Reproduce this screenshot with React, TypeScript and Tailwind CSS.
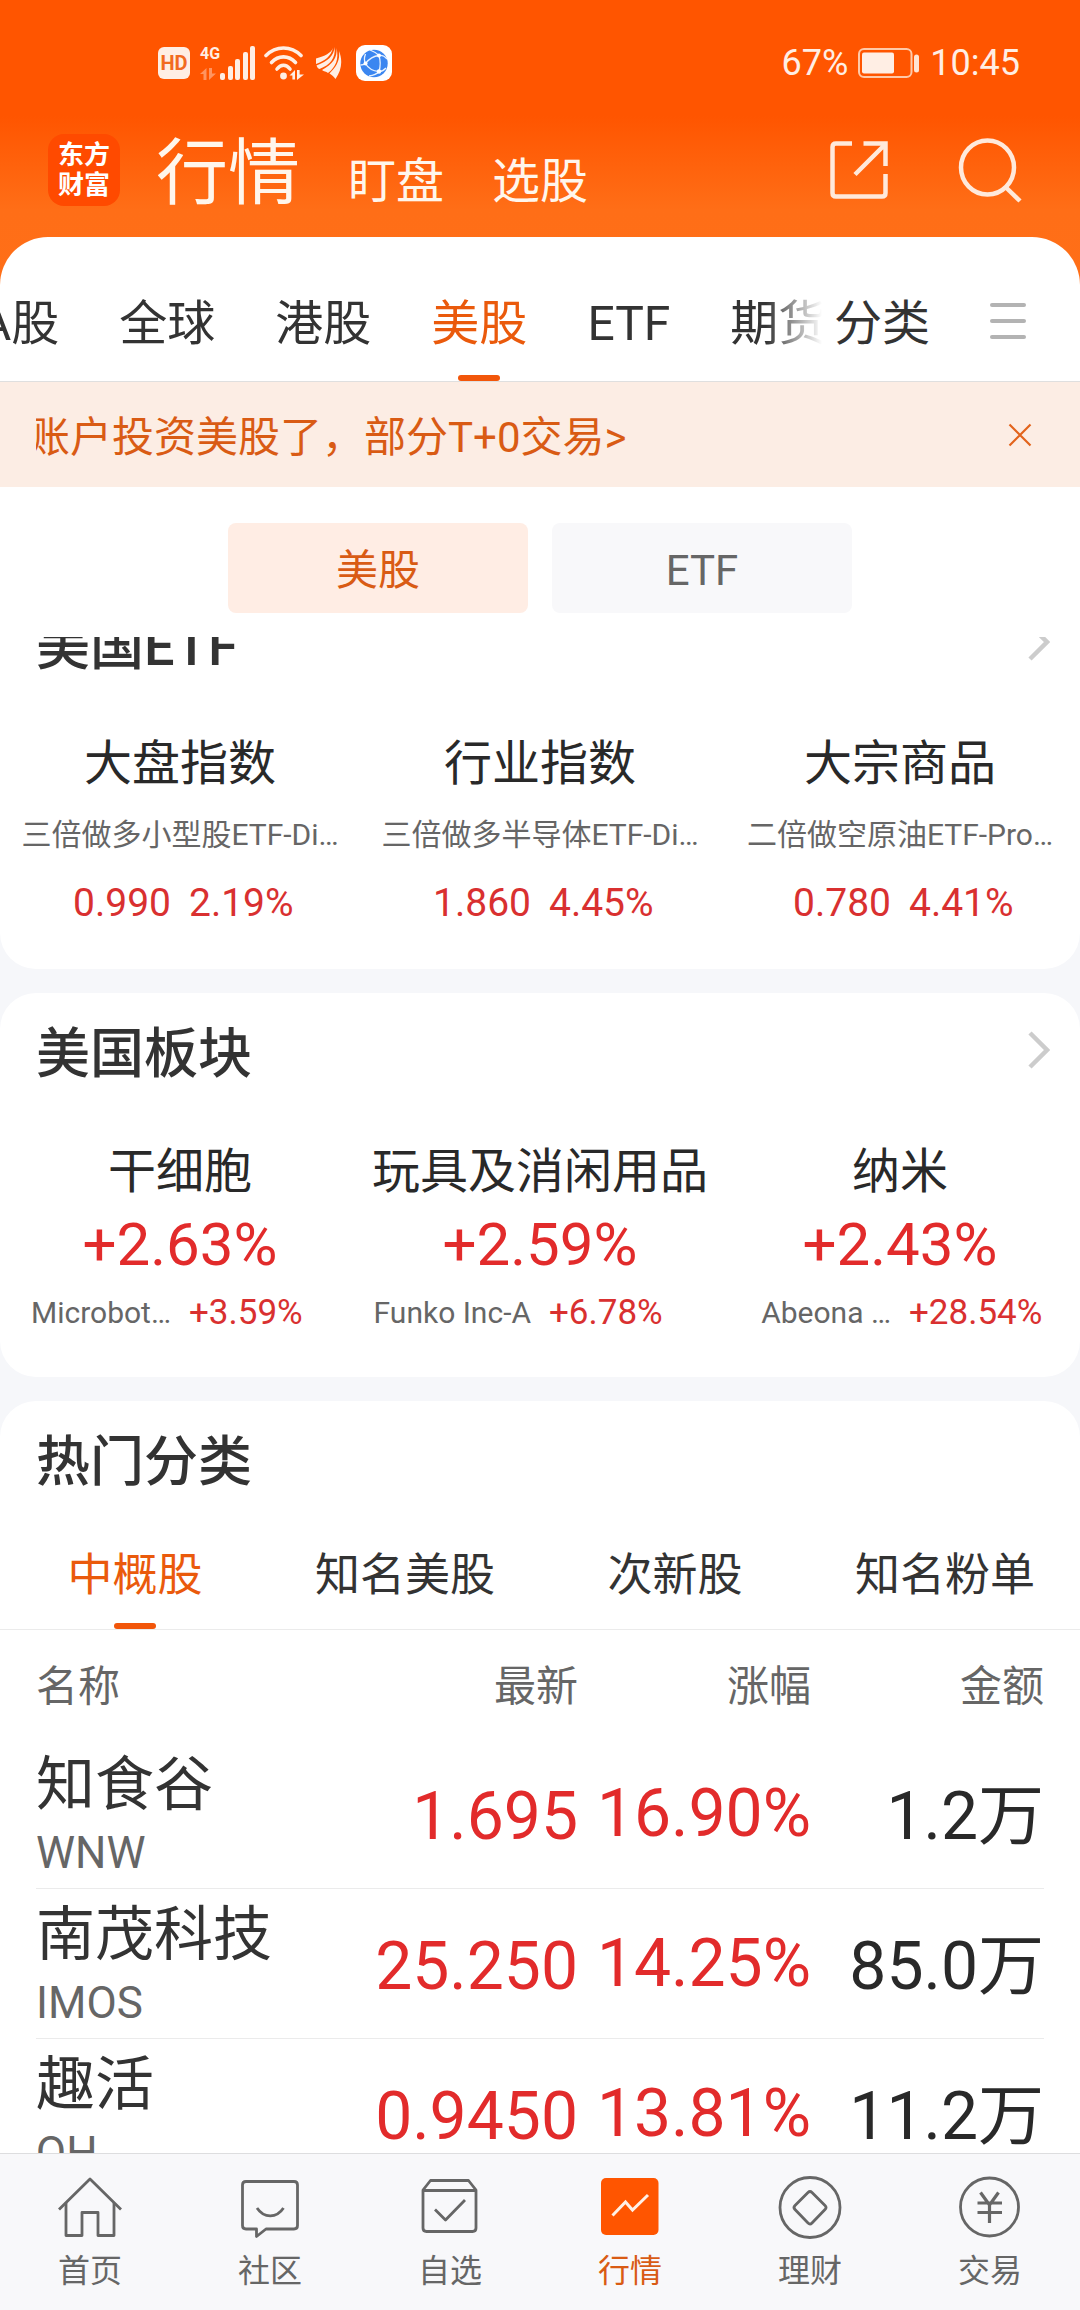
import React from 'react';

const marketTabs = ['A股', '全球', '港股', '美股', 'ETF', '期货'];

const etfGroups = [
  { title: '大盘指数', fund: '三倍做多小型股ETF-Di…', price: '0.990', change: '2.19%' },
  { title: '行业指数', fund: '三倍做多半导体ETF-Di…', price: '1.860', change: '4.45%' },
  { title: '大宗商品', fund: '二倍做空原油ETF-Pro…', price: '0.780', change: '4.41%' },
];

const sectors = [
  { title: '干细胞', change: '+2.63%', leader: 'Microbot…', leaderChange: '+3.59%' },
  { title: '玩具及消闲用品', change: '+2.59%', leader: 'Funko Inc-A', leaderChange: '+6.78%' },
  { title: '纳米', change: '+2.43%', leader: 'Abeona …', leaderChange: '+28.54%' },
];

const categoryTabs = ['中概股', '知名美股', '次新股', '知名粉单'];

const stocks = [
  { name: '知食谷', code: 'WNW', price: '1.695', change: '16.90%', amount: '1.2万' },
  { name: '南茂科技', code: 'IMOS', price: '25.250', change: '14.25%', amount: '85.0万' },
  { name: '趣活', code: 'QH', price: '0.9450', change: '13.81%', amount: '11.2万' },
];

function SignalIcon() {
  return (
    <svg width="36" height="34" viewBox="0 0 36 34" fill="#ffeee4" aria-hidden="true">
      <rect x="0" y="27" width="5" height="7" rx="2" />
      <rect x="8" y="20" width="5" height="14" rx="2" />
      <rect x="15" y="13" width="5" height="21" rx="2" />
      <rect x="23" y="6" width="5" height="28" rx="2" />
      <rect x="30" y="0" width="5" height="34" rx="2" />
    </svg>
  );
}

function WifiIcon() {
  return (
    <svg width="40" height="34" viewBox="0 0 40 34" fill="none" aria-hidden="true">
      <g stroke="#ffeee4" strokeWidth="3.6" strokeLinecap="round">
        <path d="M2 9.500C12-.5 27-.5 37 9.500" />
        <path d="M7.500 16.500C14.500 9 24.500 9 31.500 16.500" />
        <path d="M13 23C17 18 22 18 26 23" />
      </g>
      <circle cx="19.500" cy="30" r="3.400" fill="#ffeee4" />
      <path d="M25.500 29.500L31 24v9.500h-2.600v-4zM33 24h2.600v4.500H40L33 34z" fill="#ffeee4" />
    </svg>
  );
}

function WingIcon() {
  return (
    <svg width="26" height="32" viewBox="0 0 26 32" fill="#ffeee4" aria-hidden="true">
      <path d="M17 1C15 6 9 9 0 11.500V17C9 14 15 9 17 1z" />
      <path d="M18.500 0C18 9 12 14 .5 18.500c.5 1.500 1.500 3 3 3.500C14 18 20 11 18.500 0z" />
      <path d="M20.500 1c1 10-4 16-14.500 22 2 1.500 4 1.500 6 3C20 20 23 12 20.500 1z" />
      <path d="M23 4c1 9-2 15-9.500 22.500 2.500 1.500 4.500 3.500 6 5.500C25.500 23 27 14 23 4z" />
    </svg>
  );
}

function BrowserIcon() {
  return (
    <svg width="36" height="36" viewBox="0 0 36 36" aria-hidden="true">
      <rect width="36" height="36" rx="9" fill="#fff" />
      <circle cx="18" cy="18.500" r="13.700" fill="#3b86f0" />
      <g fill="none" stroke="#e8f3ff" strokeWidth="1.300">
        <path d="M14 5C18 6.500 21 8.500 23 10.500 26.500 10 29 11.500 31 14" />
        <path d="M23 10.500C18 11 13 14 9.500 18.500 12 23 17 26 23 26.500c1.500-5 1.500-11 0-16" />
        <path d="M9.500 18.500C8 16 8 13 9.500 9M9.500 18.500C7.500 20 6 20 4.500 20M23 26.500c-2 2.500-6 4-10 4.500M23 26.500c3-.2 5-1.200 7-3.500" />
      </g>
      <g fill="#fff">
        <circle cx="23" cy="10.500" r="2" />
        <circle cx="9.500" cy="18.500" r="2" />
        <circle cx="23" cy="26.500" r="2.200" />
      </g>
    </svg>
  );
}

function BatteryIcon() {
  return (
    <svg width="62" height="30" viewBox="0 0 62 30" fill="none" aria-hidden="true">
      <rect x="1" y="1" width="52.500" height="28" rx="5" stroke="#ffc9a8" strokeWidth="2" />
      <rect x="4" y="4.500" width="32" height="21" rx="2" fill="#ffeee4" />
      <rect x="56" y="6.500" width="5" height="18" rx="2.500" fill="#ffe3d2" />
    </svg>
  );
}

function ShareIcon() {
  return (
    <svg width="58" height="60" viewBox="0 0 58 60" fill="none" stroke="#ffe9db" strokeWidth="4.500" aria-hidden="true">
      <path d="M22 3.500H6Q2.500 3.500 2.500 7v46Q2.500 56.500 6 56.500h46Q55.500 56.500 55.500 53V34" />
      <path d="M33.500 3.500h22V26M55 4.500L25 34.500" />
    </svg>
  );
}

function SearchIcon() {
  return (
    <svg width="64" height="66" viewBox="0 0 64 66" fill="none" stroke="#ffe9db" strokeWidth="4.500" aria-hidden="true">
      <ellipse cx="29.500" cy="30.500" rx="26.500" ry="27" />
      <path d="M48 50.500L62 64" />
    </svg>
  );
}

function Chevron() {
  return (
    <svg width="22" height="38" viewBox="0 0 22 38" fill="none" stroke="#cccccc" strokeWidth="4.500" aria-hidden="true">
      <path d="M2 2L19 19 2 36" />
    </svg>
  );
}

const navStroke = { fill: 'none', stroke: '#666666', strokeWidth: 2.8 } as const;

const navItems: { label: string; active?: boolean; icon: React.ReactNode }[] = [
  {
    label: '首页',
    icon: (
      <g {...navStroke} strokeLinejoin="round">
        <path d="M1 34.500L32 4l31 30.500" />
        <path d="M8 28v32.500H24V37.500h16v23H56V28" />
      </g>
    ),
  },
  {
    label: '社区',
    icon: (
      <g {...navStroke} strokeLinejoin="round">
        <path d="M8 6.500h48q3.500 0 3.500 3.500v40.500q0 3.500-3.500 3.500H28l-9.500 7.500V54H8q-3.500 0-3.500-3.500V10q0-3.500 3.500-3.500z" />
        <path d="M19 33c7 10.500 19.500 10.500 26.500 0" />
      </g>
    ),
  },
  {
    label: '自选',
    icon: (
      <g {...navStroke} strokeLinejoin="round">
        <path d="M5 15L12.500 5.500h38L58 15v38q0 3.500-3.500 3.500h-46Q5 56.500 5 53zM5 15.500h53" />
        <path d="M17 34.500L27.500 45 47 25" />
      </g>
    ),
  },
  {
    label: '行情',
    active: true,
    icon: (
      <g>
        <rect x="3" y="3" width="57.500" height="57" rx="5" fill="#ff5500" />
        <path d="M14.500 40.500l13-13.500 7 8L50 20" fill="none" stroke="#fff0e6" strokeWidth="3" />
      </g>
    ),
  },
  {
    label: '理财',
    icon: (
      <g {...navStroke} strokeLinejoin="round">
        <circle cx="32" cy="32.500" r="30" />
        <path d="M30 17.500q2-2 4 0L47 30.500q2 2 0 4L34 48q-2 2-4 0L17 34.500q-2-2 0-4z" />
      </g>
    ),
  },
  {
    label: '交易',
    icon: (
      <g {...navStroke}>
        <circle cx="31.500" cy="32" r="29" />
        <path d="M22.500 17.500l9 12.500 9-12.500M31.500 30v18M19.500 28H44M19.500 37.500H44" strokeWidth="3.200" />
      </g>
    ),
  },
];

function CardHeader({ title, more }: { title: string; more?: boolean }) {
  return (
    <div className="flex h-[120px] items-center justify-between pt-1 pr-[30px] pl-9">
      <h2 className="text-[54px] leading-[72px] font-medium text-[#333333]">{title}</h2>
      {more && (
        <button type="button" aria-label={`更多${title}`} className="pb-2.5">
          <Chevron />
        </button>
      )}
    </div>
  );
}

export default function App() {
  return (
    <div className="flex h-screen flex-col overflow-hidden bg-[#f6f7fa] font-[Roboto,'Noto_Sans_CJK_SC',sans-serif]">
      <header className="shrink-0 bg-[linear-gradient(#ff5500_116px,#ff6e17_210px,#ff7019_100%)]">
        <div className="flex h-[126px] items-center justify-between pr-[60px] pl-[158px] text-[36px] leading-none text-[#ffeee4]">
          <div className="flex items-center">
            <span className="flex h-8 w-8 items-center justify-center rounded-md bg-[#ffeee4] text-[20px] leading-none font-bold text-[#f26a20]">
              HD
            </span>
            <span className="ml-2.5 flex h-[34px] flex-col justify-between text-[16px] leading-4 font-bold">
              4G
              <svg width="16" height="12" viewBox="0 0 16 12" fill="#ff9460" aria-hidden="true">
                <path d="M0 6L6.500 0v12H3.500V6zM9 0h3v5.500h4L9 12z" />
              </svg>
            </span>
            <SignalIcon />
            <span className="ml-2 flex">
              <WifiIcon />
            </span>
            <span className="ml-3 flex">
              <WingIcon />
            </span>
            <span className="ml-3.5 flex">
              <BrowserIcon />
            </span>
          </div>
          <div className="flex items-center gap-2.5">
            <span>67%</span>
            <BatteryIcon />
            <span>10:45</span>
          </div>
        </div>

        <div className="flex h-[111px] items-center justify-between pr-[58px] pb-6 pl-12 text-[#fff6ec]">
          <div className="flex items-center">
            <div className="mr-9 flex h-[72px] w-[72px] flex-col items-center justify-center rounded-2xl bg-[#ff4a00] text-[26px] leading-[30px] font-bold text-white">
              <span>东方</span>
              <span>财富</span>
            </div>
            <nav className="flex items-baseline gap-12 pt-4 text-[48px] leading-[76px]">
              <button type="button" className="text-[72px]">
                行情
              </button>
              <button type="button">盯盘</button>
              <button type="button">选股</button>
            </nav>
          </div>
          <div className="flex items-center gap-[70px]">
            <button type="button" aria-label="分享">
              <ShareIcon />
            </button>
            <button type="button" aria-label="搜索">
              <SearchIcon />
            </button>
          </div>
        </div>

        <div className="flex h-[145px] rounded-t-[48px] border-b border-[#dfdfdf] bg-white text-[48px] text-[#333333]">
          <div className="mr-3 min-w-0 flex-1 overflow-hidden rounded-tl-[48px] [mask-image:linear-gradient(to_right,black_calc(100%-56px),transparent)]">
            <div className="-ml-5 flex h-full gap-[60px]">
              {marketTabs.map((tab) => {
                const active = tab === '美股';
                return (
                  <button
                    key={tab}
                    type="button"
                    className={`flex shrink-0 flex-col items-center justify-between pt-14 leading-[62px] whitespace-nowrap ${active ? 'text-[#ea5a0c]' : ''}`}
                  >
                    {tab}
                    {active && <span className="h-1.5 w-[42px] rounded-full bg-[#f2560a]" />}
                  </button>
                );
              })}
            </div>
          </div>
          <div className="flex items-start gap-[60px] pt-14 pr-[54px] leading-[62px]">
            <button type="button">分类</button>
            <button type="button" aria-label="菜单" className="flex h-[56px] flex-col justify-center gap-3">
              <span className="h-1 w-9 rounded-full bg-[#b3b3b3]" />
              <span className="h-1 w-9 rounded-full bg-[#b3b3b3]" />
              <span className="h-1 w-9 rounded-full bg-[#b3b3b3]" />
            </button>
          </div>
        </div>
      </header>

      <div className="flex h-[105px] shrink-0 items-center justify-between bg-[#fcede4] pr-12 pl-9 text-[42px] leading-[60px] text-[#d95b14]">
        <a href="#account" className="overflow-hidden pt-1.5 whitespace-nowrap">
          <span className="-ml-2">账户投资美股了，部分T+0交易&gt;</span>
        </a>
        <button type="button" aria-label="关闭">
          <svg width="24" height="24" viewBox="0 0 24 24" stroke="#e2641c" strokeWidth="2.200" aria-hidden="true">
            <path d="M1.500 1.500l21 21M22.500 1.500l-21 21" />
          </svg>
        </button>
      </div>

      <div className="flex shrink-0 justify-center gap-6 bg-white pt-9 pb-6 text-[42px] leading-[60px]">
        <button type="button" className="h-[90px] w-[300px] rounded-lg bg-[#ffede4] pt-1.5 text-[#d95b14]">
          美股
        </button>
        <button type="button" className="h-[90px] w-[300px] rounded-lg bg-[#f8f8fa] pt-1.5 text-[#666666]">
          ETF
        </button>
      </div>

      <main className="min-h-0 flex-1 overflow-hidden">
        <div className="-mt-[52px] flex flex-col gap-6">
          <section className="rounded-[36px] bg-white pb-[42px]">
            <CardHeader title="美国ETF" more />
            <div className="mt-[26px] grid grid-cols-3 text-center">
              {etfGroups.map((g) => (
                <div key={g.title} className="whitespace-nowrap">
                  <h3 className="text-[48px] leading-[66px] text-[#292929]">{g.title}</h3>
                  <p className="mt-3.5 text-[30px] leading-[48px] text-[#666666]">{g.fund}</p>
                  <p className="mt-5 grid grid-cols-2 gap-[18px] text-[39px] leading-[48px] text-[#d93030]">
                    <span className="text-right">{g.price}</span>
                    <span className="text-left">{g.change}</span>
                  </p>
                </div>
              ))}
            </div>
          </section>

          <section className="rounded-[36px] bg-white pb-10">
            <CardHeader title="美国板块" more />
            <div className="mt-[26px] grid grid-cols-3 text-center">
              {sectors.map((s) => (
                <div key={s.title} className="whitespace-nowrap">
                  <h3 className="text-[48px] leading-[66px] text-[#292929]">{s.title}</h3>
                  <p className="mt-1 text-[60px] leading-[72px] text-[#e22b2b]">{s.change}</p>
                  <p className="mt-2 grid grid-cols-2 gap-[18px] text-[30px] leading-[48px]">
                    <span className="text-right text-[#666666]">{s.leader}</span>
                    <span className="text-left text-[35px] text-[#d93030]">{s.leaderChange}</span>
                  </p>
                </div>
              ))}
            </div>
          </section>

          <section className="rounded-t-[36px] bg-white">
            <CardHeader title="热门分类" />
            <div className="grid h-[109px] grid-cols-4 border-b border-[#ebebeb] text-[45px] leading-[60px] text-[#333333]">
              {categoryTabs.map((tab) => {
                const active = tab === '中概股';
                return (
                  <button
                    key={tab}
                    type="button"
                    className={`flex flex-col items-center justify-between pt-[25px] ${active ? 'text-[#ea5a0c]' : ''}`}
                  >
                    {tab}
                    {active && <span className="h-1.5 w-[42px] rounded-full bg-[#f2560a]" />}
                  </button>
                );
              })}
            </div>
            <div className="px-9">
              <table className="w-full">
                <thead>
                  <tr className="h-[108px] text-[42px] leading-[60px] text-[#666666]">
                    <th className="pt-1.5 text-left font-normal">名称</th>
                    <th className="w-[234px] pt-1.5 text-right font-normal">最新</th>
                    <th className="w-[233px] pt-1.5 text-right font-normal">涨幅</th>
                    <th className="w-[233px] pt-1.5 text-right font-normal">金额</th>
                  </tr>
                </thead>
                <tbody>
                  {stocks.map((s) => (
                    <tr
                      key={s.code}
                      className="h-[150px] border-b border-[#ebebeb] text-right text-[66px] leading-[76px] whitespace-nowrap text-[#e22b2b]"
                    >
                      <td className="pt-3 text-left">
                        <div className="text-[59px] leading-[68px] text-[#333333]">{s.name}</div>
                        <div className="text-[44px] leading-[68px] text-[#666666]">{s.code}</div>
                      </td>
                      <td className="pt-2">{s.price}</td>
                      <td className="pt-0.5">{s.change}</td>
                      <td className="pt-2 text-[#292929]">{s.amount}</td>
                    </tr>
                  ))}
                </tbody>
              </table>
            </div>
          </section>
        </div>
      </main>

      <nav className="grid shrink-0 grid-cols-6 border-t border-[#dddddf] bg-[#f8f8fa] pt-[21px] pb-[19px]">
        {navItems.map((item) => (
          <a
            key={item.label}
            href={`#${item.label}`}
            className={`flex flex-col items-center gap-3 text-[32px] leading-[40px] ${item.active ? 'text-[#d95b14]' : 'text-[#666666]'}`}
          >
            <svg width="64" height="64" viewBox="0 0 64 64" aria-hidden="true">
              {item.icon}
            </svg>
            {item.label}
          </a>
        ))}
      </nav>
    </div>
  );
}
